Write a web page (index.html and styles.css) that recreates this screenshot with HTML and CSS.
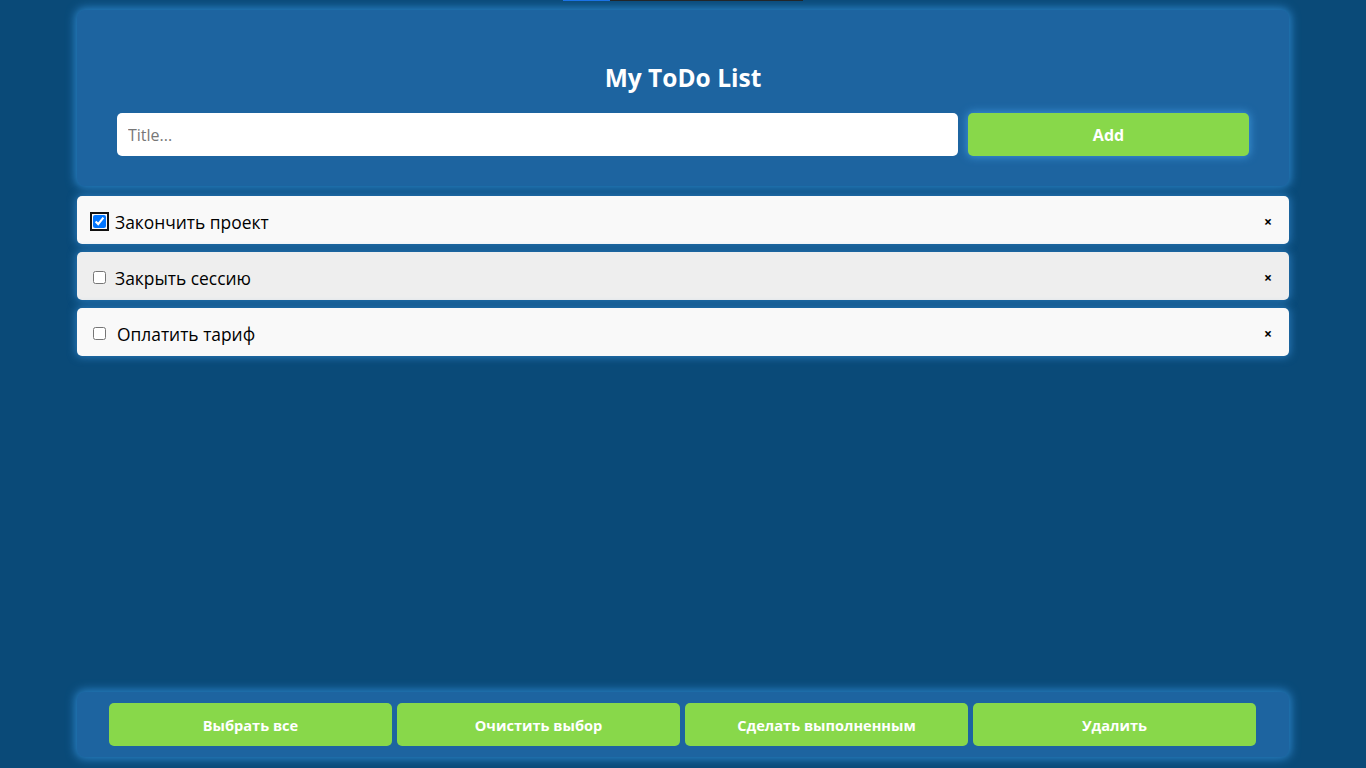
FILE: index.html
```html
<!DOCTYPE html>
<html lang="ru">
<head>
<meta charset="utf-8">
<title>My ToDo List</title>
<link rel="stylesheet" href="styles.css">
</head>
<body>
<div class="page">
  <div class="topbar"><span class="topbar-fill"></span></div>
  <header class="card header">
    <h1 class="title">My ToDo List</h1>
    <form class="add-form">
      <input class="title-input" type="text" placeholder="Title...">
      <button class="btn add-btn" type="button">Add</button>
    </form>
  </header>
  <ul class="list">
    <li class="item">
      <input class="check focused" type="checkbox" checked>
      <span class="item-text">Закончить проект</span>
      <span class="remove">×</span>
    </li>
    <li class="item alt">
      <input class="check" type="checkbox">
      <span class="item-text">Закрыть сессию</span>
      <span class="remove">×</span>
    </li>
    <li class="item">
      <input class="check" type="checkbox">
      <span class="item-text shifted">Оплатить тариф</span>
      <span class="remove">×</span>
    </li>
  </ul>
  <footer class="card footer">
    <button class="btn foot-btn" type="button">Выбрать все</button>
    <button class="btn foot-btn" type="button">Очистить выбор</button>
    <button class="btn foot-btn" type="button">Сделать выполненным</button>
    <button class="btn foot-btn" type="button">Удалить</button>
  </footer>
</div>
</body>
</html>
```

FILE: styles.css
```css
* { box-sizing: border-box; }
html, body { margin: 0; padding: 0; }
body {
  background: #0a4a78;
  font-family: "Comic Sans MS", "Open Sans", "DejaVu Sans", sans-serif;
  color: #000;
}
.page {
  min-height: 100vh;
  display: flex;
  flex-direction: column;
  align-items: center;
  padding-bottom: 11px;
}
.topbar {
  width: 240px;
  height: 1px;
  background: #222;
  display: flex;
}
.topbar-fill { width: 47px; background: #1a73e8; }
.card {
  width: 1212px;
  background: #1d64a0;
  border-radius: 8px;
  box-shadow: 0 0 10px 2px #2b82c6;
}
.header {
  margin-top: 9px;
  padding: 54px 40px 30px;
}
.title {
  margin: 0 0 21px;
  text-align: center;
  color: #fff;
  font-size: 24.5px;
  line-height: 28px;
  font-weight: 700;
}
.add-form { display: flex; gap: 10px; }
.title-input {
  flex: 0 0 841px;
  height: 43px;
  border: none;
  border-radius: 5px;
  padding: 0 11px;
  font-family: inherit;
  font-size: 16px;
  background: #fff;
  outline: none;
}
.title-input::placeholder { color: #777; }
.btn {
  border: none;
  border-radius: 5px;
  background: #88d84a;
  color: #fff;
  font-family: inherit;
  font-weight: 700;
  height: 43px;
  cursor: pointer;
}
.add-btn {
  flex: 1;
  font-size: 16px;
  padding-top: 1px;
  box-shadow: 0 0 8px 1px #3a92d6;
}
.list {
  list-style: none;
  margin: 10px 0 0;
  padding: 0;
  width: 1212px;
  display: flex;
  flex-direction: column;
  gap: 8px;
}
.item {
  height: 48px;
  background: #f9f9f9;
  border-radius: 5px;
  display: flex;
  align-items: center;
  padding: 3px 16px 0 12px;
  font-size: 17.4px;
  box-shadow: 0 0 8px 1px #2b7cbe;
}
.item.alt { background: #eeeeee; }
.check {
  width: 13px;
  height: 13px;
  margin: 0 9px 0 4px;
  accent-color: #0075ff;
}
.check.focused { outline: 2px solid #111; outline-offset: 1px; border-radius: 2px; }
.item-text { flex: 1; }
.item-text.shifted { padding-left: 2px; }
.remove {
  font-size: 14px;
  font-weight: 700;
  width: 10px;
  text-align: center;
}
.footer {
  margin-top: auto;
  display: flex;
  gap: 5px;
  padding: 11px 33px 11px 32px;
}
.foot-btn {
  flex: 0 0 283px;
  font-size: 14.6px;
  padding-top: 1px;
}
```
